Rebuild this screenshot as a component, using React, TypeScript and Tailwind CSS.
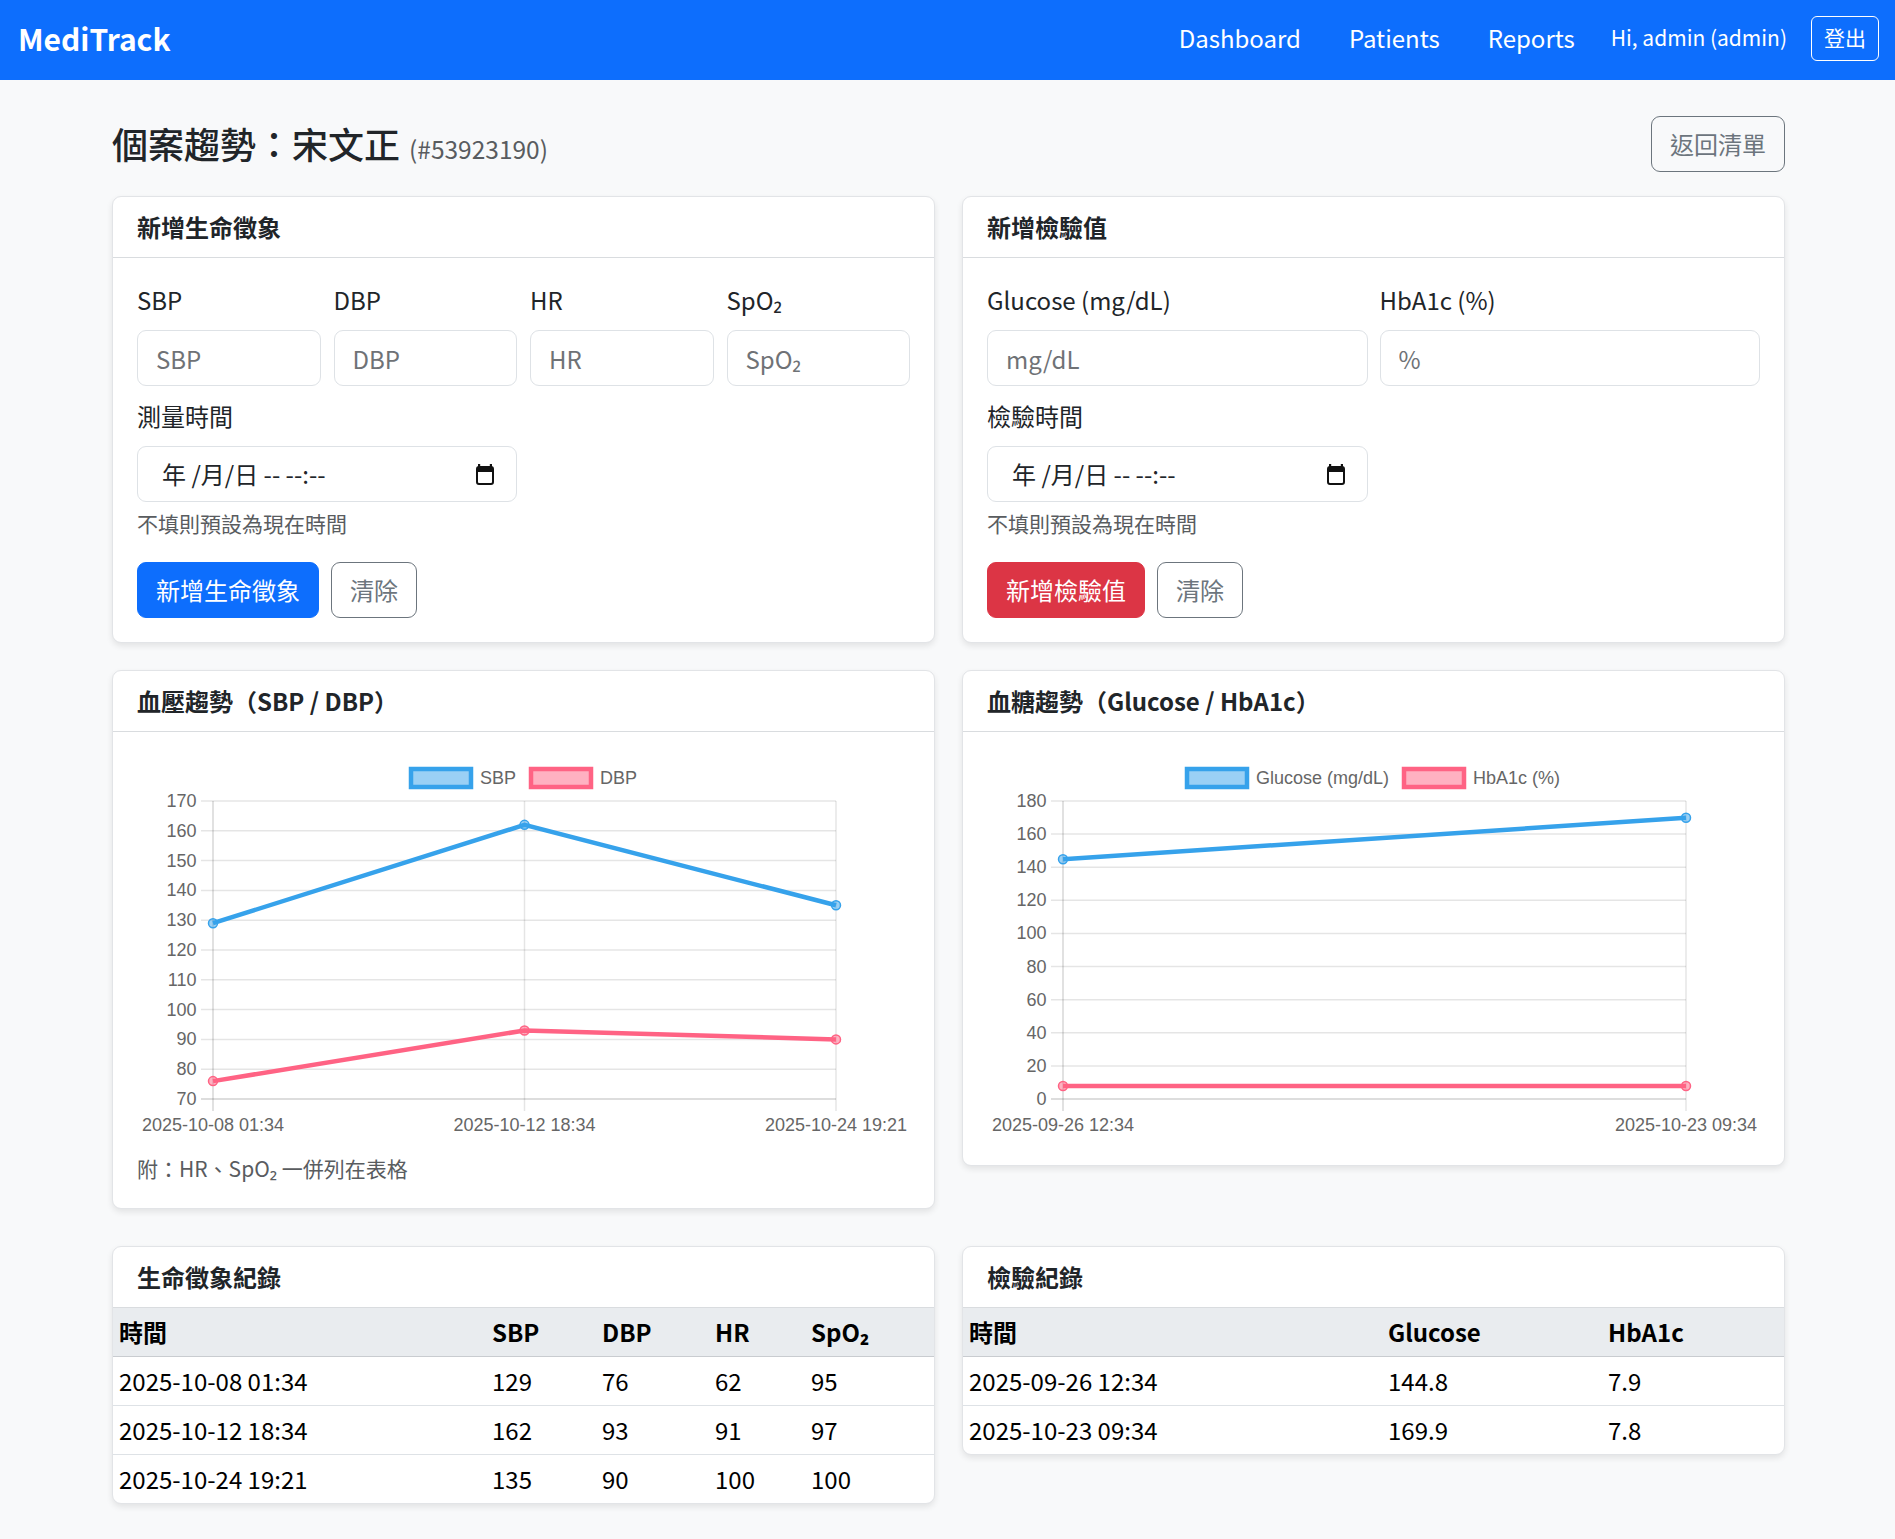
import React from "react";

type Series = { color: string; fill: string; values: number[] };

function LineChart(props: {
  yMin: number;
  yMax: number;
  step: number;
  labels: string[];
  series: Series[];
  legend: { label: string; box: number; text: number; color: string; fill: string }[];
}) {
  const { yMin, yMax, step, labels, series, legend } = props;
  const W = 774;
  const H = 385;
  const left = 76;
  const right = 699;
  const top = 45;
  const bottom = 343;
  const ticks: number[] = [];
  for (let v = yMin; v <= yMax + 0.0001; v += step) ticks.push(v);
  const y = (v: number) => top + ((yMax - v) / (yMax - yMin)) * (bottom - top);
  const x = (i: number) => left + (i / (labels.length - 1)) * (right - left);
  const grid = "rgba(0,0,0,0.1)";
  return (
    <svg width={W} height={H} viewBox={`0 0 ${W} ${H}`} className="block">
      {legend.map((l) => (
        <g key={l.label}>
          <rect x={l.box} y={13} width={60} height={18} fill={l.fill} stroke={l.color} strokeWidth={4.5} />
          <text
            x={l.text}
            y={22}
            dominantBaseline="central"
            fontFamily="'Liberation Sans', Arial, sans-serif"
            fontSize={18}
            fill="#666"
          >
            {l.label}
          </text>
        </g>
      ))}
      {ticks.map((t) => (
        <g key={t}>
          <line x1={left - 12} x2={right} y1={y(t)} y2={y(t)} stroke={t === yMin ? "rgba(0,0,0,0.18)" : grid} strokeWidth={1.5} />
          <text
            x={left - 16.5}
            y={y(t)}
            textAnchor="end"
            dominantBaseline="central"
            fontFamily="'Liberation Sans', Arial, sans-serif"
            fontSize={18}
            fill="#666"
          >
            {t}
          </text>
        </g>
      ))}
      {labels.map((lab, i) => (
        <g key={lab}>
          <line x1={x(i)} x2={x(i)} y1={top} y2={bottom + 12} stroke={i === 0 ? "rgba(0,0,0,0.16)" : grid} strokeWidth={1.5} />
          <text
            x={x(i)}
            y={369}
            textAnchor="middle"
            dominantBaseline="central"
            fontFamily="'Liberation Sans', Arial, sans-serif"
            fontSize={18}
            fill="#666"
          >
            {lab}
          </text>
        </g>
      ))}
      {series.map((s, si) => (
        <g key={si}>
          <polyline
            points={s.values.map((v, i) => `${x(i)},${y(v)}`).join(" ")}
            fill="none"
            stroke={s.color}
            strokeWidth={4.5}
          />
          {s.values.map((v, i) => (
            <circle key={i} cx={x(i)} cy={y(v)} r={4.5} fill={s.fill} stroke={s.color} strokeWidth={1.5} />
          ))}
        </g>
      ))}
    </svg>
  );
}

function Card(props: { title: string; children: React.ReactNode }) {
  return (
    <div className="bg-white border border-[#e2e4e7] rounded-[9px] shadow-[0_3px_6px_rgba(0,0,0,0.09)] overflow-hidden">
      <div className="h-[61px] px-[24px] flex items-center border-b border-[#d9dcdf] font-bold text-[#212529]">
        {props.title}
      </div>
      {props.children}
    </div>
  );
}

function Field(props: { label: string; placeholder: string }) {
  return (
    <div className="flex flex-col">
      <label className="mb-[12px] leading-[36px]">{props.label}</label>
      <input
        placeholder={props.placeholder}
        className="h-[56px] w-full px-[18px] border border-[#dee2e6] rounded-[9px] bg-white text-[24px] text-[#212529] placeholder:text-[#6f7276] outline-none"
      />
    </div>
  );
}

function CalendarIcon() {
  return (
    <svg width="18" height="21" viewBox="0 0 18 21">
      <rect x="2" y="0" width="2.2" height="4" fill="#111" />
      <rect x="13.8" y="0" width="2.2" height="4" fill="#111" />
      <rect x="1" y="3" width="16" height="17" rx="2" fill="none" stroke="#111" strokeWidth="2" />
      <rect x="1" y="3" width="16" height="5" fill="#111" />
    </svg>
  );
}

function DateField(props: { label: string }) {
  return (
    <div className="flex flex-col">
      <label className="mb-[12px] leading-[36px]">{props.label}</label>
      <div className="h-[56px] w-full pl-[24px] pr-[22px] border border-[#dee2e6] rounded-[9px] bg-white flex items-center justify-between text-[#212529]">
        <span>年 /月/日 -- --:--</span>
        <CalendarIcon />
      </div>
      <div className="mt-[6px] text-[21px] leading-[31.5px] text-[#595c5f]">不填則預設為現在時間</div>
    </div>
  );
}

export default function App() {
  const vitals = [
    ["2025-10-08 01:34", "129", "76", "62", "95"],
    ["2025-10-12 18:34", "162", "93", "91", "97"],
    ["2025-10-24 19:21", "135", "90", "100", "100"],
  ];
  const labs = [
    ["2025-09-26 12:34", "144.8", "7.9"],
    ["2025-10-23 09:34", "169.9", "7.8"],
  ];
  const blue = "#36a2eb";
  const blueFill = "rgba(54,162,235,0.5)";
  const red = "#ff6384";
  const redFill = "rgba(255,99,132,0.5)";

  return (
    <div className="min-h-screen bg-[#f8f9fa] text-[#212529] font-['Noto_Sans_CJK_TC','Noto_Sans',sans-serif] text-[24px] leading-[1.5] pb-[36px]">
      <nav className="h-[80px] bg-[#0d6efd] flex items-center pl-[18px] pr-[16px] pb-[4px] text-white">
        <span className="text-[30px] font-bold leading-[45px]">MediTrack</span>
        <div className="ml-auto flex items-center">
          <span>Dashboard</span>
          <span className="ml-[48px]">Patients</span>
          <span className="ml-[48px]">Reports</span>
          <span className="ml-[36px] text-[21px]">Hi, admin (admin)</span>
          <button className="ml-[24px] h-[45px] px-[12px] border border-white rounded-[6px] text-[21px] leading-[31.5px] text-white">
            登出
          </button>
        </div>
      </nav>

      <div className="w-[1673px] ml-[112px]">
        <div className="pt-[36px] flex items-center justify-between mb-[24px]">
          <h4 className="pt-[4px] text-[36px] font-medium leading-[43px] flex items-baseline">
            <span>個案趨勢：宋文正</span>
            <span className="ml-[9px] text-[24.5px] font-normal text-[#595c5f]">(#53923190)</span>
          </h4>
          <button className="h-[56px] px-[18px] border border-[#6c757d] rounded-[9px] text-[#6c757d] bg-transparent">
            返回清單
          </button>
        </div>

        <div className="grid grid-cols-2 gap-[27px] items-start">
          <Card title="新增生命徵象">
            <div className="p-[24px]">
              <div className="grid grid-cols-4 gap-x-[13px]">
                <Field label="SBP" placeholder="SBP" />
                <Field label="DBP" placeholder="DBP" />
                <Field label="HR" placeholder="HR" />
                <Field label="SpO₂" placeholder="SpO₂" />
              </div>
              <div className="grid grid-cols-2 gap-x-[13px] mt-[12px]">
                <DateField label="測量時間" />
              </div>
              <div className="mt-[22px] flex gap-[12px]">
                <button className="h-[56px] px-[18px] rounded-[9px] border border-[#0d6efd] bg-[#0d6efd] text-white">新增生命徵象</button>
                <button className="h-[56px] px-[18px] rounded-[9px] border border-[#6c757d] text-[#6c757d]">清除</button>
              </div>
            </div>
          </Card>

          <Card title="新增檢驗值">
            <div className="p-[24px]">
              <div className="grid grid-cols-2 gap-x-[12px]">
                <Field label="Glucose (mg/dL)" placeholder="mg/dL" />
                <Field label="HbA1c (%)" placeholder="%" />
              </div>
              <div className="grid grid-cols-2 gap-x-[12px] mt-[12px]">
                <DateField label="檢驗時間" />
              </div>
              <div className="mt-[22px] flex gap-[12px]">
                <button className="h-[56px] px-[18px] rounded-[9px] border border-[#dc3545] bg-[#dc3545] text-white">新增檢驗值</button>
                <button className="h-[56px] px-[18px] rounded-[9px] border border-[#6c757d] text-[#6c757d]">清除</button>
              </div>
            </div>
          </Card>

          <Card title="血壓趨勢（SBP / DBP）">
            <div className="p-[24px]">
              <LineChart
                yMin={70}
                yMax={170}
                step={10}
                labels={["2025-10-08 01:34", "2025-10-12 18:34", "2025-10-24 19:21"]}
                series={[
                  { color: blue, fill: blueFill, values: [129, 162, 135] },
                  { color: red, fill: redFill, values: [76, 93, 90] },
                ]}
                legend={[
                  { label: "SBP", box: 274, text: 343, color: blue, fill: blueFill },
                  { label: "DBP", box: 394, text: 463, color: red, fill: redFill },
                ]}
              />
              <div className="mt-[12px] text-[21px] leading-[31.5px] text-[#595c5f]">附：HR、SpO₂ 一併列在表格</div>
            </div>
          </Card>

          <Card title="血糖趨勢（Glucose / HbA1c）">
            <div className="p-[24px]">
              <LineChart
                yMin={0}
                yMax={180}
                step={20}
                labels={["2025-09-26 12:34", "2025-10-23 09:34"]}
                series={[
                  { color: blue, fill: blueFill, values: [144.8, 169.9] },
                  { color: red, fill: redFill, values: [7.9, 7.8] },
                ]}
                legend={[
                  { label: "Glucose (mg/dL)", box: 200, text: 269, color: blue, fill: blueFill },
                  { label: "HbA1c (%)", box: 417, text: 486, color: red, fill: redFill },
                ]}
              />
            </div>
          </Card>
        </div>

        <div className="grid grid-cols-2 gap-[27px] items-start mt-[37px]">
          <Card title="生命徵象紀錄">
            <table className="w-full border-collapse text-black table-fixed">
              <colgroup>
                <col className="w-[373px]" />
                <col className="w-[110px]" />
                <col className="w-[113px]" />
                <col className="w-[96px]" />
                <col />
              </colgroup>
              <thead>
                <tr className="bg-[#e9ecef] border-b border-[#c9ccd0]">
                  {["時間", "SBP", "DBP", "HR", "SpO₂"].map((h) => (
                    <th key={h} className="px-[6px] py-[6px] text-left font-bold leading-[36px]">
                      {h}
                    </th>
                  ))}
                </tr>
              </thead>
              <tbody>
                {vitals.map((r, ri) => (
                  <tr key={ri} className={ri < vitals.length - 1 ? "border-b border-[#dee2e6]" : ""}>
                    {r.map((c, ci) => (
                      <td key={ci} className="px-[6px] py-[6px] leading-[36px]">
                        {c}
                      </td>
                    ))}
                  </tr>
                ))}
              </tbody>
            </table>
          </Card>

          <Card title="檢驗紀錄">
            <table className="w-full border-collapse text-black table-fixed">
              <colgroup>
                <col className="w-[419px]" />
                <col className="w-[220px]" />
                <col />
              </colgroup>
              <thead>
                <tr className="bg-[#e9ecef] border-b border-[#c9ccd0]">
                  {["時間", "Glucose", "HbA1c"].map((h) => (
                    <th key={h} className="px-[6px] py-[6px] text-left font-bold leading-[36px]">
                      {h}
                    </th>
                  ))}
                </tr>
              </thead>
              <tbody>
                {labs.map((r, ri) => (
                  <tr key={ri} className={ri < labs.length - 1 ? "border-b border-[#dee2e6]" : ""}>
                    {r.map((c, ci) => (
                      <td key={ci} className="px-[6px] py-[6px] leading-[36px]">
                        {c}
                      </td>
                    ))}
                  </tr>
                ))}
              </tbody>
            </table>
          </Card>
        </div>
      </div>
    </div>
  );
}
